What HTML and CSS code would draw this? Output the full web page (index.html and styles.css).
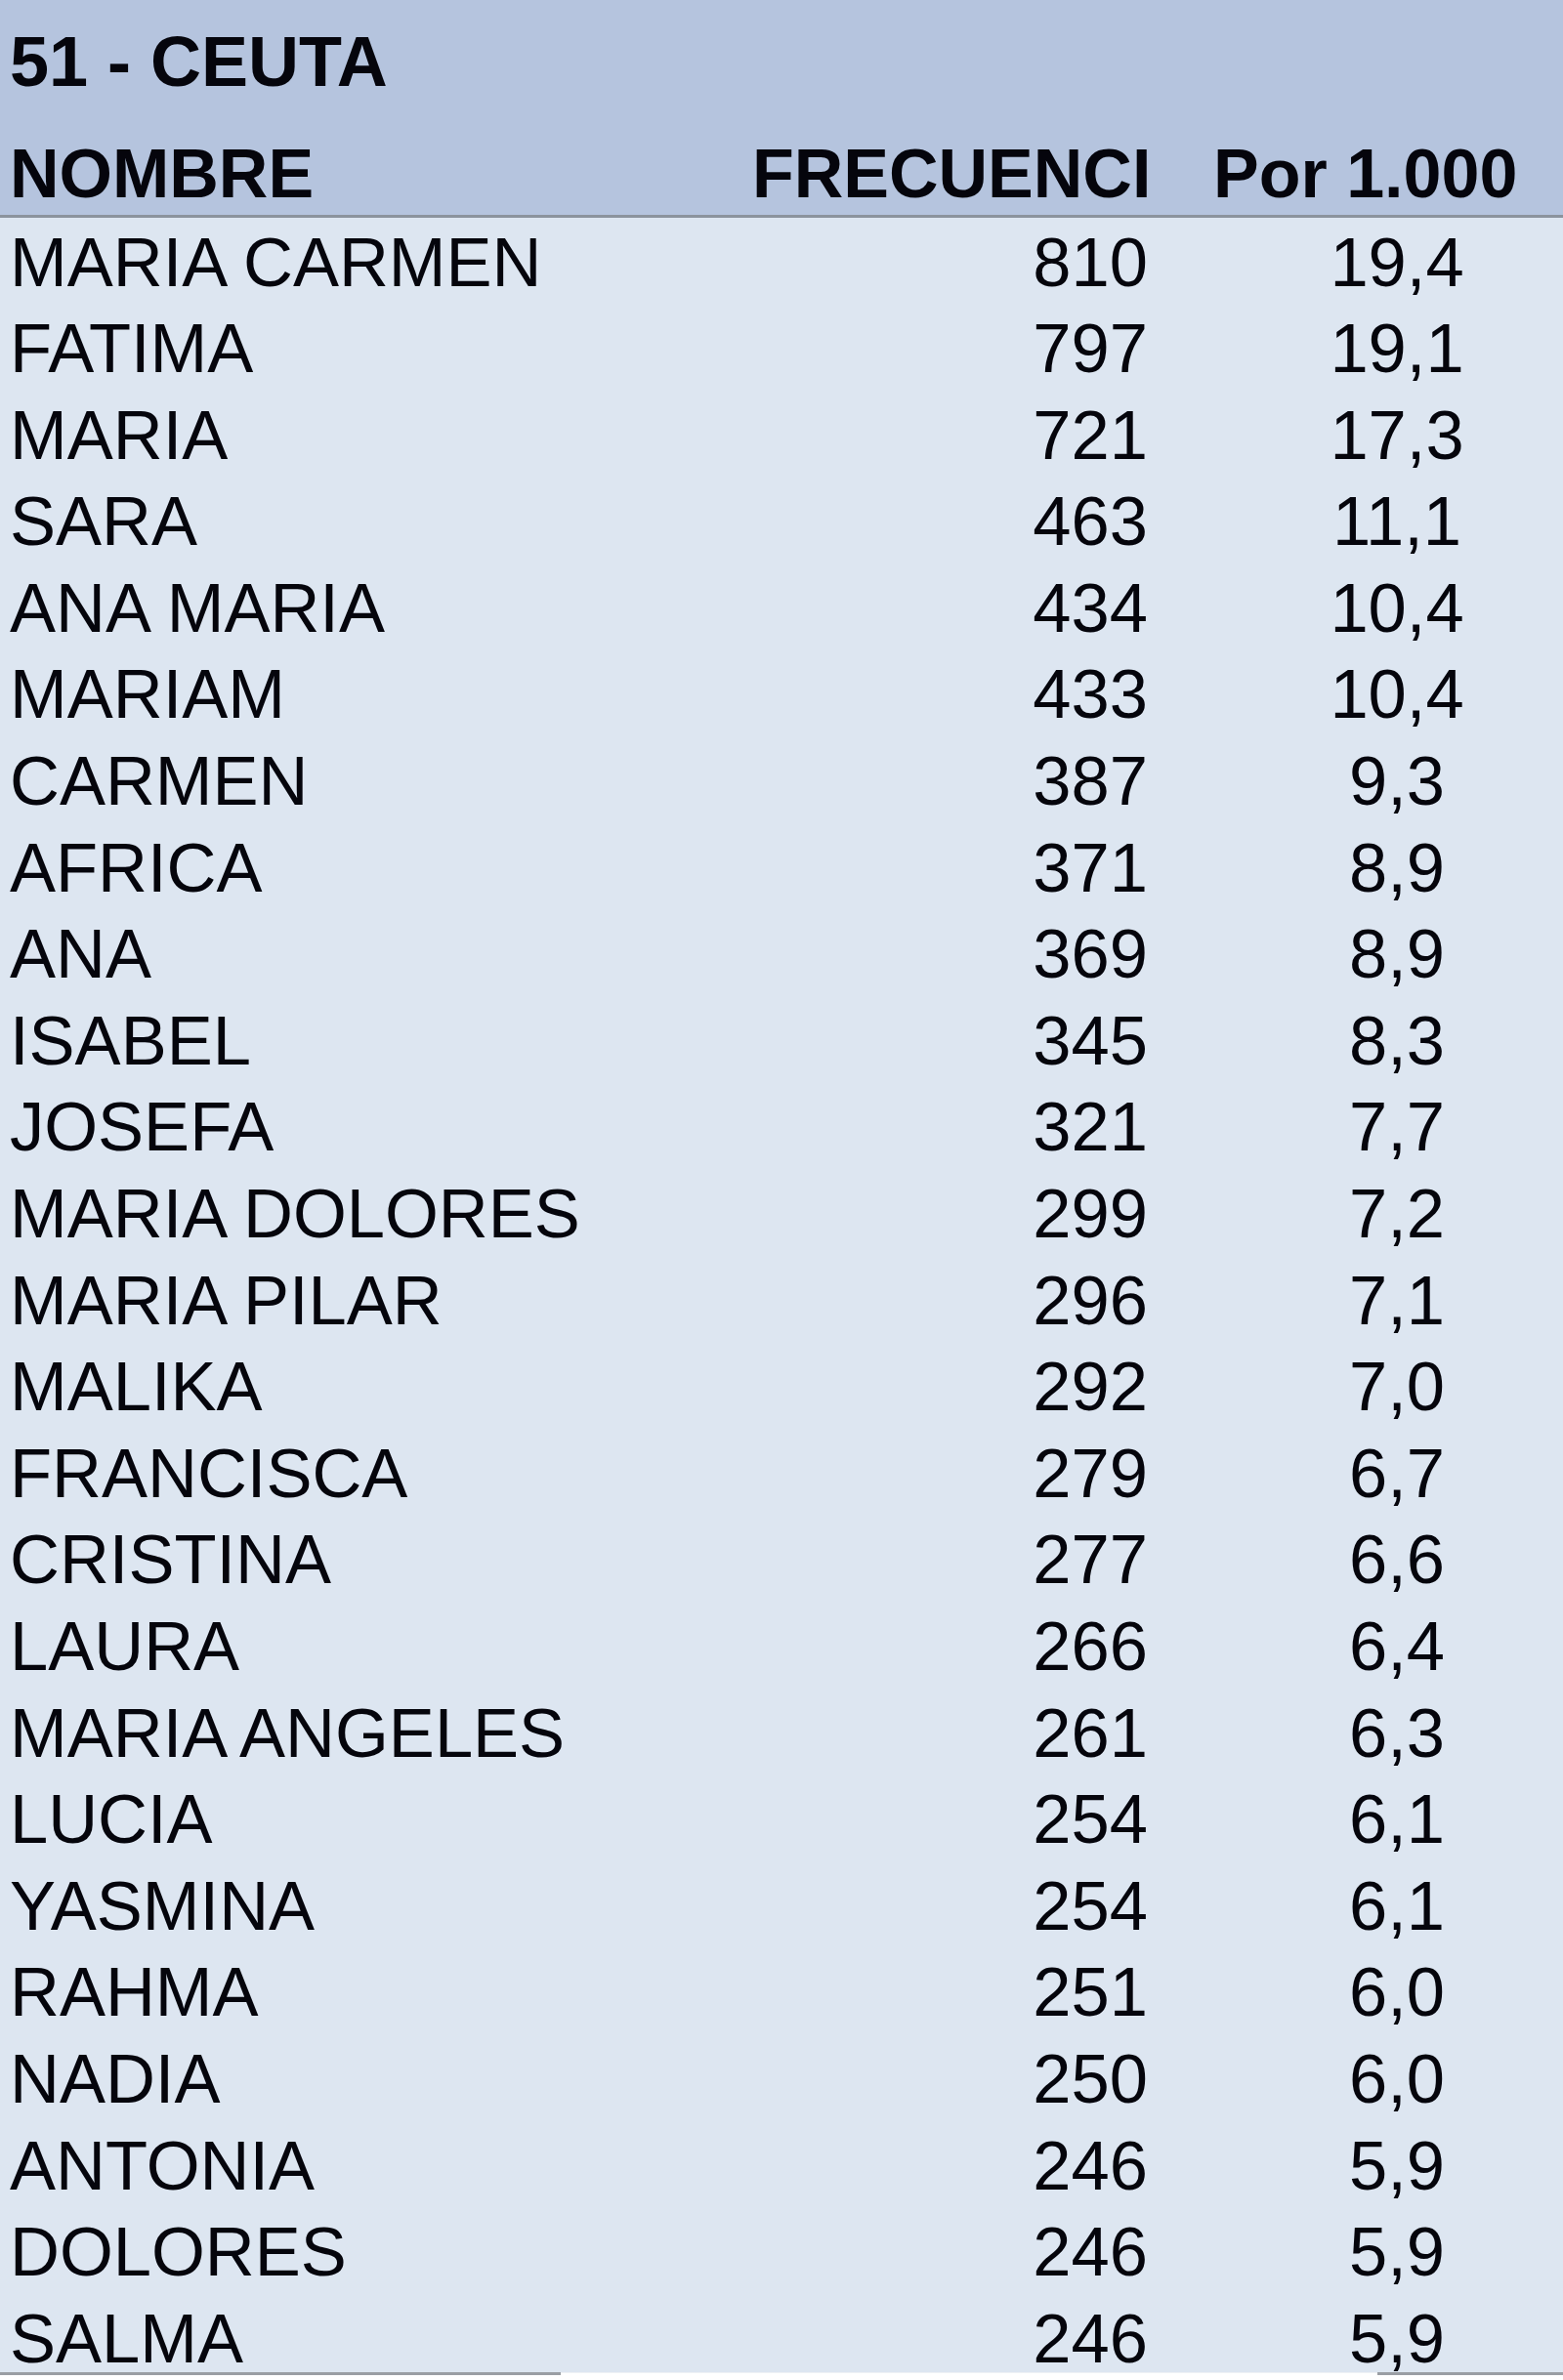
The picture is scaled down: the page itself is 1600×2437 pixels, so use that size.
FILE: index.html
```html
<!DOCTYPE html>
<html lang="es">
<head>
<meta charset="utf-8">
<title>51 - CEUTA</title>
<link rel="stylesheet" href="styles.css">
</head>
<body>
<div class="sheet">
  <div class="head">
    <div class="title">51 - CEUTA</div>
    <div class="row hrow">
      <div class="c name">NOMBRE</div>
      <div class="c freq">FRECUENCI</div>
      <div class="c per hper">Por 1.000</div>
    </div>
  </div>
  <div class="body">
    <div class="row"><div class="c name">MARIA CARMEN</div><div class="c freq">810</div><div class="c per">19,4</div></div>
    <div class="row"><div class="c name">FATIMA</div><div class="c freq">797</div><div class="c per">19,1</div></div>
    <div class="row"><div class="c name">MARIA</div><div class="c freq">721</div><div class="c per">17,3</div></div>
    <div class="row"><div class="c name">SARA</div><div class="c freq">463</div><div class="c per">11,1</div></div>
    <div class="row"><div class="c name">ANA MARIA</div><div class="c freq">434</div><div class="c per">10,4</div></div>
    <div class="row"><div class="c name">MARIAM</div><div class="c freq">433</div><div class="c per">10,4</div></div>
    <div class="row"><div class="c name">CARMEN</div><div class="c freq">387</div><div class="c per">9,3</div></div>
    <div class="row"><div class="c name">AFRICA</div><div class="c freq">371</div><div class="c per">8,9</div></div>
    <div class="row"><div class="c name">ANA</div><div class="c freq">369</div><div class="c per">8,9</div></div>
    <div class="row"><div class="c name">ISABEL</div><div class="c freq">345</div><div class="c per">8,3</div></div>
    <div class="row"><div class="c name">JOSEFA</div><div class="c freq">321</div><div class="c per">7,7</div></div>
    <div class="row"><div class="c name">MARIA DOLORES</div><div class="c freq">299</div><div class="c per">7,2</div></div>
    <div class="row"><div class="c name">MARIA PILAR</div><div class="c freq">296</div><div class="c per">7,1</div></div>
    <div class="row"><div class="c name">MALIKA</div><div class="c freq">292</div><div class="c per">7,0</div></div>
    <div class="row"><div class="c name">FRANCISCA</div><div class="c freq">279</div><div class="c per">6,7</div></div>
    <div class="row"><div class="c name">CRISTINA</div><div class="c freq">277</div><div class="c per">6,6</div></div>
    <div class="row"><div class="c name">LAURA</div><div class="c freq">266</div><div class="c per">6,4</div></div>
    <div class="row"><div class="c name">MARIA ANGELES</div><div class="c freq">261</div><div class="c per">6,3</div></div>
    <div class="row"><div class="c name">LUCIA</div><div class="c freq">254</div><div class="c per">6,1</div></div>
    <div class="row"><div class="c name">YASMINA</div><div class="c freq">254</div><div class="c per">6,1</div></div>
    <div class="row"><div class="c name">RAHMA</div><div class="c freq">251</div><div class="c per">6,0</div></div>
    <div class="row"><div class="c name">NADIA</div><div class="c freq">250</div><div class="c per">6,0</div></div>
    <div class="row"><div class="c name">ANTONIA</div><div class="c freq">246</div><div class="c per">5,9</div></div>
    <div class="row"><div class="c name">DOLORES</div><div class="c freq">246</div><div class="c per">5,9</div></div>
    <div class="row last"><div class="c name">SALMA</div><div class="c freq">246</div><div class="c per">5,9</div></div>
  </div>
  <div class="foot">
    <div class="seg seg-left"></div>
    <div class="seg seg-mid"></div>
    <div class="seg seg-right"></div>
  </div>
</div>
</body>
</html>
```

FILE: styles.css
```css
html, body {
  margin: 0;
  padding: 0;
  background: #ffffff;
}

.sheet {
  width: 1600px;
  font-family: "Liberation Sans", Arial, sans-serif;
  font-size: 70.5px;
  line-height: 80px;
  color: #05050c;
}

.head {
  background: #b5c4de;
  border-bottom: 3px solid #8b939d;
}

.title {
  font-weight: bold;
  font-size: 72px;
  padding: 23px 0 35px 10px;
  height: 80px;
}

.hrow {
  font-weight: bold;
  font-size: 70px;
  height: 80px;
  padding-bottom: 2px;
}

.row {
  display: grid;
  grid-template-columns: 770px 466px 364px;
  white-space: nowrap;
}

.body {
  background: #dde6f1;
}

.body .row {
  height: 88.6px;
  box-sizing: border-box;
  padding-top: 5.5px;
}

.body .row.last {
  height: 80px;
}

.name {
  padding-left: 10px;
}

.freq {
  text-align: right;
  padding-right: 61px;
}

.per {
  text-align: center;
  padding-left: 24px;
}

.hper {
  text-align: left;
  padding-left: 6px;
}

.foot {
  display: flex;
  height: 8px;
  background: #ffffff;
}

.seg {
  box-sizing: border-box;
  height: 8px;
}

.seg-left {
  width: 574px;
  border-top: 3px solid #9a9ea4;
}

.seg-mid {
  flex: 1;
  border-top: 1px solid #eef1f5;
}

.seg-right {
  width: 190px;
  border-top: 3px solid #9a9ea4;
}
```
